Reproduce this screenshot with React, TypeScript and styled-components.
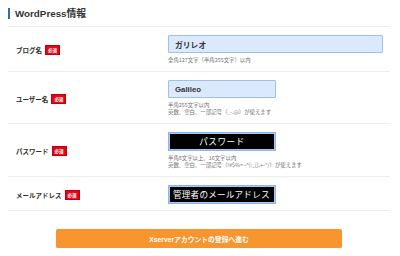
import styled, { createGlobalStyle } from "styled-components";

const GlobalStyle = createGlobalStyle`
    body {
        margin: 0;
        background: #ffffff;
        font-family: "Liberation Sans", "Noto Sans CJK JP", sans-serif;
        color: #333333;
    }
`;

interface FieldProps {
    label: string;
    hints?: string[];
    children: React.ReactNode;
}

const Field = ({ label, hints, children }: FieldProps) => {
    return (
        <Row>
            <LabelCell>
                <LabelText>{label}</LabelText>
                <Badge>必須</Badge>
            </LabelCell>
            <InputCell>
                {children}
                {hints && (
                    <Hint>
                        {hints.map((h) => (
                            <div key={h}>{h}</div>
                        ))}
                    </Hint>
                )}
            </InputCell>
        </Row>
    );
};

export default function App() {
    return (
        <Page>
            <GlobalStyle />
            <Header>
                <Bar />
                <Title>WordPress情報</Title>
            </Header>

            <Field label="ブログ名" hints={["全角127文字（半角255文字）以内"]}>
                <TextInput $wide readOnly value="ガリレオ" />
            </Field>

            <Field
                label="ユーザー名"
                hints={[
                    "半角255文字以内",
                    "英数、空白、一部記号（_-.@）が使えます",
                ]}
            >
                <TextInput readOnly value="Galileo" />
            </Field>

            <Field
                label="パスワード"
                hints={[
                    "半角8文字以上、16文字以内",
                    "英数、空白、一部記号（!#$%=~^|:_[].+-*/）が使えます",
                ]}
            >
                <MaskBox>
                    <MaskText $center>パスワード</MaskText>
                </MaskBox>
            </Field>

            <Field label="メールアドレス">
                <MaskBox>
                    <MaskText>管理者のメールアドレス</MaskText>
                </MaskBox>
            </Field>

            <ButtonWrap>
                <SubmitButton>Xserverアカウントの登録へ進む</SubmitButton>
            </ButtonWrap>
        </Page>
    );
}

const Page = styled.div`
    width: 382px;
    margin: 8px 0 0 8px;
`;

const Header = styled.div`
    display: flex;
    align-items: center;
    gap: 5px;
    height: 11px;
    padding-bottom: 7px;
    border-bottom: 1px solid #ececec;
`;

const Bar = styled.div`
    width: 2px;
    height: 11px;
    background: #2b6cbf;
`;

const Title = styled.div`
    font-size: 9.8px;
    font-weight: bold;
    line-height: 11px;
    color: #333333;
`;

const Row = styled.div`
    display: grid;
    grid-template-columns: 160px 1fr;
    align-items: center;
    padding: 8px 0 6px;
    border-bottom: 1px solid #ececec;
`;

const LabelCell = styled.div`
    display: flex;
    align-items: center;
    gap: 3px;
    padding-left: 8px;
`;

const LabelText = styled.span`
    font-family: "Noto Sans CJK JP", sans-serif;
    font-size: 6.5px;
    font-weight: bold;
    color: #2f2f2f;
    line-height: 8px;
`;

const Badge = styled.span`
    display: inline-block;
    background: #e30613;
    color: #ffffff;
    font-family: "Noto Sans CJK JP", sans-serif;
    font-size: 4.5px;
    font-weight: bold;
    line-height: 8px;
    padding: 0 2px;
    border: 0.5px solid #c00010;
`;

const InputCell = styled.div`
    display: flex;
    flex-direction: column;
    align-items: flex-start;
`;

const TextInput = styled.input<{ $wide?: boolean }>`
    box-sizing: border-box;
    width: ${(p) => (p.$wide ? "215px" : "108px")};
    height: 18px;
    margin: 0;
    padding: 0 6px;
    background: #dbe9fc;
    border: 1px solid #9ec0ec;
    border-radius: 1px;
    font-family: "Liberation Sans", "Noto Sans CJK JP", sans-serif;
    font-size: 7.8px;
    font-weight: bold;
    color: #333333;
    outline: none;
`;

const MaskBox = styled.div`
    box-sizing: border-box;
    width: 108px;
    height: 19px;
    padding: 1px;
    background: #a9c8ef;
    border: 1px solid #8fb4e6;
    display: flex;
`;

const MaskText = styled.div<{ $center?: boolean }>`
    flex: 1;
    background: #000000;
    color: #ffffff;
    font-family: "Noto Sans CJK JP", sans-serif;
    font-size: 8.6px;
    line-height: 15px;
    padding: 0 3px;
    white-space: nowrap;
    overflow: hidden;
    text-align: ${(p) => (p.$center ? "center" : "left")};
    letter-spacing: ${(p) => (p.$center ? "0.5px" : "0.2px")};
`;

const Hint = styled.div`
    margin: 4px 0 1px;
    font-family: "Noto Sans CJK JP", sans-serif;
    font-size: 5.4px;
    line-height: 7px;
    color: #707070;
`;

const ButtonWrap = styled.div`
    display: flex;
    justify-content: center;
    margin-top: 18px;
`;

const SubmitButton = styled.button`
    width: 286px;
    height: 19px;
    margin: 0;
    padding: 0;
    border: none;
    border-radius: 2px;
    background: #f7962f;
    box-shadow: 0 1px 1px rgba(0, 0, 0, 0.2);
    color: #ffffff;
    font-family: "Liberation Sans", "Noto Sans CJK JP", sans-serif;
    font-size: 6.8px;
    font-weight: bold;
    cursor: pointer;
`;
